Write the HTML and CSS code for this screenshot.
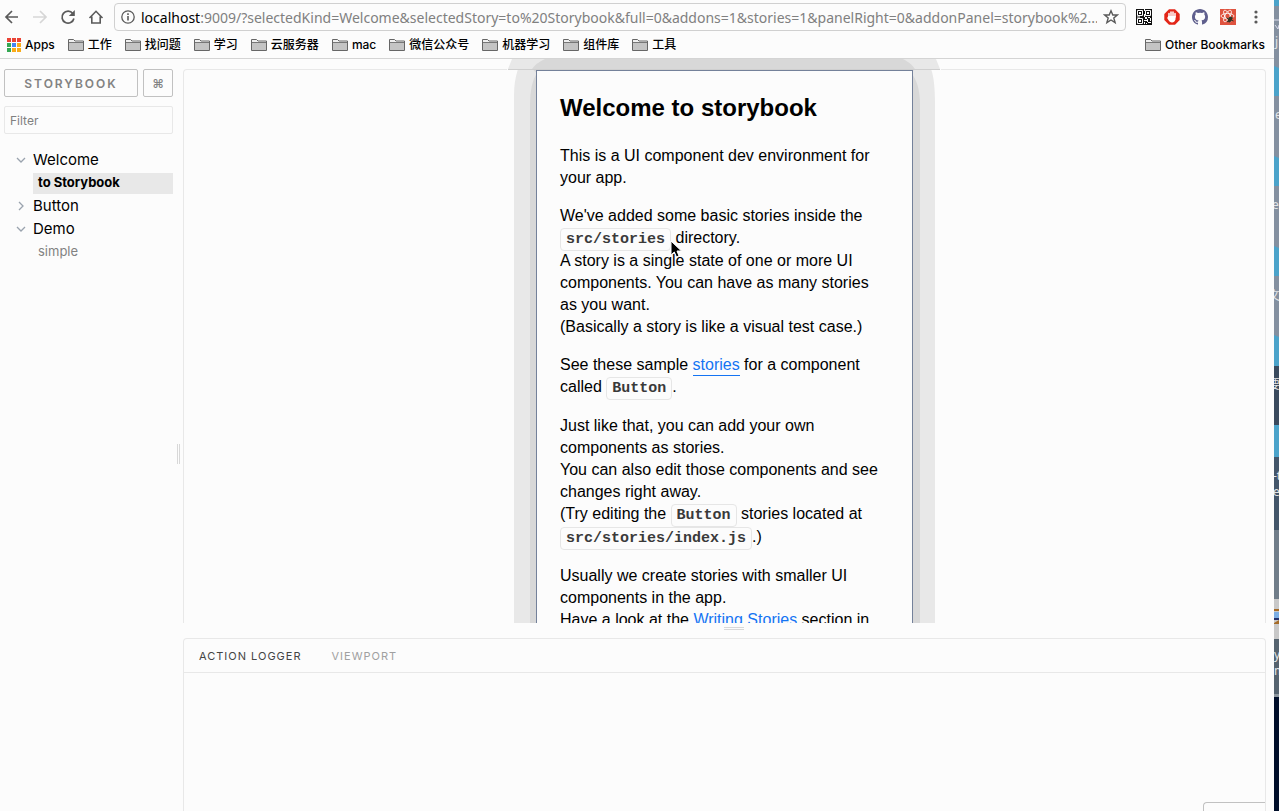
FILE: index.html
```html
<!DOCTYPE html>
<html lang="en">
<head>
<meta charset="utf-8">
<title>Storybook</title>
<link rel="stylesheet" href="styles.css">
</head>
<body>
<svg class="defs" width="0" height="0" aria-hidden="true">
  <symbol id="folder" viewBox="0 0 16 14">
    <path d="M.5 12.500V1.500H5.500L7 3H15.500V12.500Z" fill="#f0f0f0" stroke="#666"/>
    <path d="M1 5H15V12H1Z" fill="#c4c4c4"/><path d="M1 4.500H15" stroke="#777"/>
  </symbol>
</svg>
<div class="browser">
  <header class="chrome">
    <div class="toolbar">
      <nav class="nav" aria-label="Browser">
        <button class="icon-btn" aria-label="Back"><svg width="16" height="16" viewBox="0 0 16 16" fill="none" stroke="#5a5a5a" stroke-width="1.7"><path d="M14 8H2.500M8 2L2 8L8 14"/></svg></button>
        <button class="icon-btn" aria-label="Forward"><svg width="16" height="16" viewBox="0 0 16 16" fill="none" stroke="#d6d6d6" stroke-width="1.700"><path d="M1 8H13.500M8 2L14 8L8 14"/></svg></button>
        <button class="icon-btn" aria-label="Reload"><svg width="16" height="16" viewBox="0 0 16 16"><path d="M12.800 4.500A6 6 0 1 0 13.900 9.500" fill="none" stroke="#5a5a5a" stroke-width="1.700"/><path d="M14.800 1V7H8.800Z" fill="#5a5a5a"/></svg></button>
        <button class="icon-btn" aria-label="Home"><svg width="16" height="16" viewBox="0 0 16 16" fill="none" stroke="#5a5a5a" stroke-width="1.600"><path d="M1.500 9L8 2.300L14.500 9M3.800 7.500V14H12.200V7.500"/></svg></button>
      </nav>
      <div class="omnibox">
        <svg width="14" height="14" viewBox="0 0 14 14"><circle cx="7" cy="7" r="6.200" fill="none" stroke="#5a5a5a" stroke-width="1.300"/><path d="M6.200 6h1.600v4.500H6.200zM6.200 3.300h1.600v1.600H6.200z" fill="#5a5a5a"/></svg>
        <div class="url"><span class="host">localhost</span>:9009/?selectedKind=Welcome&amp;selectedStory=to%20Storybook&amp;full=0&amp;addons=1&amp;stories=1&amp;panelRight=0&amp;addonPanel=storybook%2...</div>
        <button class="icon-btn" aria-label="Bookmark this page"><svg width="16" height="16" viewBox="0 0 16 16"><path d="M8 1.800L9.800 6H14.300L10.800 9L12.100 13.600L8 11L3.900 13.600L5.200 9L1.700 6H6.200Z" fill="none" stroke="#5a5a5a" stroke-width="1.400"/></svg></button>
      </div>
      <div class="extensions">
        <button class="icon-btn" aria-label="QR code"><svg width="16" height="16" viewBox="0 0 16 16"><path fill="#111" d="M0 0h16v16H0z"/><path fill="none" stroke="#fff" d="M1.500 1.500h5v5h-5zM9.500 1.500h5v5h-5zM1.500 9.500h5v5h-5z"/><path fill="#fff" d="M3 3h2v2H3zM11 3h2v2h-2zM3 11h2v2H3zM8 0h1v2H8zM8 5h1v3H8zM1 7.500h3v1H1zM9 8h2v2H9zM12 8h2v1h-2zM14 9h1v3h-1zM8 11h3v1H8zM11 10h1v3h-1zM12 13h3v1h-3zM8 13h1v2H8zM10 14h1v1h-1z"/></svg></button>
        <button class="icon-btn" aria-label="Ad blocker"><svg width="16" height="16" viewBox="0 0 16 16"><path d="M5 .3H11L15.700 5V11L11 15.700H5L.3 11V5Z" fill="#e32618"/><path d="M5 8V4.500M7 7V3M9 7V3M11 8V4.500" stroke="#fff" stroke-width="1.500" stroke-linecap="round"/><path d="M4.300 7H11.700L11.500 10.500Q10.500 13.500 8 13.500Q5.500 13.500 3.200 9Z" fill="#fff"/></svg></button>
        <button class="icon-btn" aria-label="GitHub"><svg width="16" height="16" viewBox="0 0 16 16"><path fill="#5f5f8d" d="M8 0C3.580 0 0 3.580 0 8c0 3.540 2.290 6.530 5.470 7.590.4.070.55-.17.55-.38V13.700c-2.010.37-2.530-.49-2.690-.94-.09-.23-.48-.94-.82-1.130-.28-.15-.68-.52-.01-.53.630-.01 1.080.58 1.230.82.720 1.210 1.870.87 2.330.66.070-.52.280-.87.510-1.070-1.780-.2-3.640-.89-3.640-3.950 0-.87.310-1.590.820-2.150-.08-.2-.36-1.020.080-2.120 0 0 .67-.21 2.200.82a7.600 7.600 0 0 1 4 0c1.530-1.040 2.200-.82 2.200-.82.44 1.100.16 1.920.08 2.120.51.560.82 1.270.82 2.150 0 3.070-1.870 3.750-3.650 3.950.29.250.54.730.54 1.480v2.200c0 .21.150.46.550.38A8 8 0 0 0 16 8c0-4.420-3.580-8-8-8Z"/></svg></button>
        <button class="icon-btn" aria-label="React developer tools"><svg width="16" height="16" viewBox="0 0 16 16"><path fill="#df533f" d="M0 0h16v16H0z"/><g fill="none" stroke="#fff" stroke-width=".8"><ellipse cx="7.500" cy="7" rx="6.500" ry="2.500"/><ellipse cx="7.500" cy="7" rx="6.500" ry="2.500" transform="rotate(60 7.500 7)"/><ellipse cx="7.500" cy="7" rx="6.500" ry="2.500" transform="rotate(120 7.500 7)"/></g><ellipse cx="10" cy="10.500" rx="2" ry="3" fill="#332" transform="rotate(25 10 10.500)"/><path d="M6.500 9L13.500 12M7 13L13 8.500" stroke="#332"/></svg></button>
        <button class="icon-btn" aria-label="Menu"><svg width="16" height="16" viewBox="0 0 16 16" fill="#5a5a5a"><circle cx="8" cy="3" r="1.600"/><circle cx="8" cy="8" r="1.600"/><circle cx="8" cy="13" r="1.600"/></svg></button>
      </div>
    </div>
    <nav class="bookmarks" aria-label="Bookmarks">
      <a href="#"><svg width="14" height="14" viewBox="0 0 14 14"><path fill="#ea4335" d="M0 0h4v4H0zM5 0h4v4H5zM10 0h4v4h-4z"/><path fill="#34a853" d="M0 5h4v4H0zM0 10h4v4H0z"/><path fill="#4285f4" d="M5 5h4v4H5z"/><path fill="#f9ab18" d="M10 5h4v4h-4zM5 10h4v4H5zM10 10h4v4h-4z"/></svg>Apps</a>
      <a href="#"><svg width="16" height="14"><use href="#folder"/></svg>工作</a>
      <a href="#"><svg width="16" height="14"><use href="#folder"/></svg>找问题</a>
      <a href="#"><svg width="16" height="14"><use href="#folder"/></svg>学习</a>
      <a href="#"><svg width="16" height="14"><use href="#folder"/></svg>云服务器</a>
      <a href="#"><svg width="16" height="14"><use href="#folder"/></svg>mac</a>
      <a href="#"><svg width="16" height="14"><use href="#folder"/></svg>微信公众号</a>
      <a href="#"><svg width="16" height="14"><use href="#folder"/></svg>机器学习</a>
      <a href="#"><svg width="16" height="14"><use href="#folder"/></svg>组件库</a>
      <a href="#"><svg width="16" height="14"><use href="#folder"/></svg>工具</a>
      <a class="other" href="#"><svg width="16" height="14"><use href="#folder"/></svg>Other Bookmarks</a>
    </nav>
  </header>
  <div class="storybook">
    <aside class="sidebar">
      <div class="brand">
        <button class="brand-name">STORYBOOK</button>
        <button class="shortcut" aria-label="Shortcuts">⌘</button>
      </div>
      <input class="filter" type="text" placeholder="Filter" aria-label="Filter">
      <ul class="tree">
        <li><a class="kind" href="#"><svg width="10" height="10" viewBox="0 0 10 10"><path d="M1 3L5 7L9 3"/></svg>Welcome</a>
          <a class="story selected" href="#">to Storybook</a></li>
        <li><a class="kind" href="#"><svg width="10" height="10" viewBox="0 0 10 10"><path d="M3 1L7 5L3 9"/></svg>Button</a></li>
        <li><a class="kind" href="#"><svg width="10" height="10" viewBox="0 0 10 10"><path d="M1 3L5 7L9 3"/></svg>Demo</a>
          <a class="story" href="#">simple</a></li>
      </ul>
    </aside>
    <div class="splitter"><span class="grip"></span></div>
    <main class="main">
      <section class="preview">
        <div class="stage">
          <div class="phone">
            <svg class="cap" width="434" height="46" viewBox="0 0 434 46" aria-hidden="true">
              <path fill="#fcfcfc" d="M0 0H434V46H0Z"/>
              <path fill="#e8e8e8" d="M5 0H429L433 10H424Q428 20 428 46H7V36Q7 22 11 10H1Z"/>
              <path fill="#d8d8d8" d="M38 0H396Q404 4 408 10L404 14Q413 24 413 46H23Q23 24 30 14L25 10Q29 4 38 0Z"/>
              <path stroke="#cfcfcf" d="M1 10.500H433"/>
            </svg>
            <article class="screen">
              <h1>Welcome to storybook</h1>
              <p>This is a UI component dev environment for your app.</p>
              <p>We've added some basic stories inside the <code>src/stories</code> directory.<br>A story is a single state of one or more UI components. You can have as many stories as you want.<br>(Basically a story is like a visual test case.)</p>
              <p>See these sample <a href="#">stories</a> for a component called <code>Button</code>.</p>
              <p>Just like that, you can add your own components as stories.<br>You can also edit those components and see changes right away.<br>(Try editing the <code>Button</code> stories located at <code>src/stories/index.js</code>.)</p>
              <p>Usually we create stories with smaller UI components in the app.<br>Have a look at the <a href="#">Writing Stories</a> section in our documentation.</p>
            </article>
            <svg class="pointer" width="13" height="19" viewBox="0 0 13 19" aria-hidden="true"><path d="M1 1V15L4.300 12L6.500 17L9 16L7 11H11.500Z" stroke="#fff"/></svg>
          </div>
        </div>
      </section>
      <div class="divider"><span class="grip flat"></span></div>
      <section class="addons">
        <div class="tabs">
          <button class="tab active">ACTION LOGGER</button>
          <button class="tab">VIEWPORT</button>
        </div>
        <div class="log"><div class="actions"></div></div>
      </section>
    </main>
  </div>
</div>
<div class="desktop" aria-hidden="true">
  <svg width="5" height="811" viewBox="0 0 5 811">
    <path fill="#8490a0" d="M0 0H5V366H0Z"/>
    <path fill="#4ba3ca" d="M0 0H5V6H0ZM0 66L5 68V96H0ZM0 156L5 158V186H0ZM0 246L5 248V276H0ZM0 335L5 337V366H0Z"/>
    <path fill="#3a4a5e" d="M0 366H5V425H0Z"/><path fill="#4ba3ca" d="M0 425H5V457H0Z"/>
    <path fill="#44566a" d="M0 457H5V530H0Z"/><path fill="#707d89" d="M0 530H5V599H0Z"/>
    <path fill="#c8c8c8" d="M0 599H5V639H0Z"/><path fill="#a66c28" d="M0 609H5V611H0ZM0 623L5 620V624H0Z"/><path fill="#7baee4" d="M0 612H5V618H0Z"/><path fill="#23306b" d="M0 618H5V620H0Z"/>
    <path fill="#55636f" d="M0 639H5V695H0Z"/><path fill="#8c969e" d="M0 694H5V697H0Z"/>
    <path fill="#000e2a" d="M0 697H5V811H0Z"/>
    <path stroke="#dde" fill="none" d="M0 20H5M1 25L4 29L5 25"/>
    <g fill="#e4e6e8" font-family="Noto Sans, Noto Sans CJK SC, sans-serif" font-size="12"><text x="1" y="46">j</text><text x="1" y="119">e</text><text x="-2" y="209">e</text><text x="-6" y="300">文</text><text x="-6" y="389">要</text><text x="-1" y="480">-t</text><text x="-1" y="496">e</text><text x="0" y="659">y</text><text x="0" y="675">m</text></g>
  </svg>
</div>
</body>
</html>
```
FILE: styles.css
```css
* { box-sizing: border-box; }
body {
  margin: 0;
  height: 100vh;
  display: flex;
  overflow: hidden;
  background: #fcfcfc;
  color: #000;
  font-family: Inter, "Noto Sans CJK SC", sans-serif;
}
.defs { position: absolute; }
button { font: inherit; background: none; border: 0; padding: 0; }
a { color: inherit; text-decoration: none; }
svg { display: block; flex: none; }

.browser { flex: 1; min-width: 0; display: flex; flex-direction: column; }
.desktop { flex: 0 0 5px; overflow: hidden; background: #000e2a; }

.chrome { border-bottom: 1px solid #d4d4d4; }
.toolbar { display: flex; align-items: center; height: 34px; padding: 0 10px 0 4px; }
.nav { display: flex; gap: 12px; }
.omnibox {
  flex: 1;
  min-width: 0;
  height: 28px;
  margin: 0 10px;
  padding: 0 6px;
  display: flex;
  align-items: center;
  gap: 6px;
  border: 1px solid #d0d0d0;
  border-radius: 4px;
}
.url { flex: 1; min-width: 0; overflow: hidden; white-space: nowrap; font-family: "Noto Sans", sans-serif; font-size: 14px; color: #808080; }
.host { color: #000; }
.extensions { display: flex; gap: 12px; }
.bookmarks { display: flex; align-items: center; gap: 13px; height: 24px; padding: 0 9px 2px 7px; font-size: 12px; font-weight: 500; }
.bookmarks a { display: flex; align-items: center; gap: 4px; line-height: 20px; white-space: nowrap; }
.bookmarks .other { margin-left: auto; }

.storybook { flex: 1; min-height: 0; display: flex; padding-right: 8px; }
.sidebar { width: 173px; padding: 10px 0 0 4px; }
.brand { display: flex; gap: 5px; }
.brand button { height: 28px; border: 1px solid #c1c1c1; border-radius: 2px; color: #828282; font-size: 12px; font-weight: 600; }
.brand .brand-name { flex: 1; letter-spacing: 2px; }
.brand .shortcut { width: 30px; }
.filter {
  display: block;
  width: 100%;
  height: 28px;
  margin-top: 9px;
  padding: 0 5px;
  border: 1px solid #e8e8e8;
  border-radius: 2px;
  background: #fcfcfc;
  font: 12px/20px Inter, sans-serif;
}
.filter::placeholder { color: #808080; }
.tree { list-style: none; margin: 14px 0 0; padding: 0; }
.kind { display: flex; align-items: center; gap: 7px; height: 23px; padding-left: 12px; font-size: 15px; }
.kind svg { fill: none; stroke: #9aa3ae; stroke-width: 1.3; }
.story { display: block; height: 21px; margin: 2px 0 0 29px; padding-left: 5px; font-size: 13px; line-height: 19px; color: #828282; }
.story.selected { background: #e8e8e8; color: #000; font-weight: 700; }

.splitter { width: 10px; display: flex; align-items: center; padding: 38px 0 0 4px; }
.grip { width: 3px; height: 20px; border: 1px solid #d8d8d8; border-width: 0 1px; }
.grip.flat { width: 20px; height: 3px; border-width: 1px 0; }

.main { flex: 1; min-width: 0; display: flex; flex-direction: column; }
.preview { flex: 1; min-height: 0; padding-top: 10px; overflow: hidden; }
.stage { height: 100%; display: flex; justify-content: center; border: 1px solid #e8e8e8; border-bottom: 0; border-radius: 4px 4px 0 0; }
.phone { position: relative; width: 421px; height: 667px; padding: 0 22px; background: linear-gradient(to right, #e8e8e8 16px, #d8d8d8 16px, #d8d8d8 406px, #e8e8e8 406px); }
.cap { position: absolute; top: -11px; left: -7px; }
.screen {
  position: relative;
  height: 100%;
  padding: 20px 23px;
  overflow: hidden;
  border: 1px solid #74819a;
  background: #fcfcfc;
  font: 16px/22px "Liberation Sans", sans-serif;
}
.screen h1 { margin: 0 0 21px; font-size: 24px; line-height: 33px; }
.screen p { margin: 0 0 16px; }
.screen a { color: #1474f3; border-bottom: 1px solid #1474f3; padding-bottom: 2px; }
.screen code { padding: 2px 5px; border: 1px solid #e6e6e6; border-radius: 4px; color: #3a3a3a; font: bold 15px/20px "Liberation Mono", monospace; }
.pointer { position: absolute; top: 170px; left: 156px; }

.divider { height: 15px; display: flex; justify-content: center; align-items: flex-start; padding-top: 4px; }
.divider .grip { margin-left: 18px; }
.addons { height: 173px; display: flex; flex-direction: column; border: 1px solid #e8e8e8; border-bottom: 0; border-radius: 4px 4px 0 0; }
.tabs { display: flex; gap: 30px; height: 34px; padding: 0 15px; border-bottom: 1px solid #e8e8e8; }
.tab { color: #a0a0a0; font-size: 11px; letter-spacing: 1px; }
.tab.active { color: #444; }
.log { flex: 1; display: flex; justify-content: flex-end; align-items: flex-end; }
.actions { width: 62px; height: 9px; border: 1px solid #c1c1c1; border-width: 1px 0 0 1px; border-radius: 4px 0 0; }
```
